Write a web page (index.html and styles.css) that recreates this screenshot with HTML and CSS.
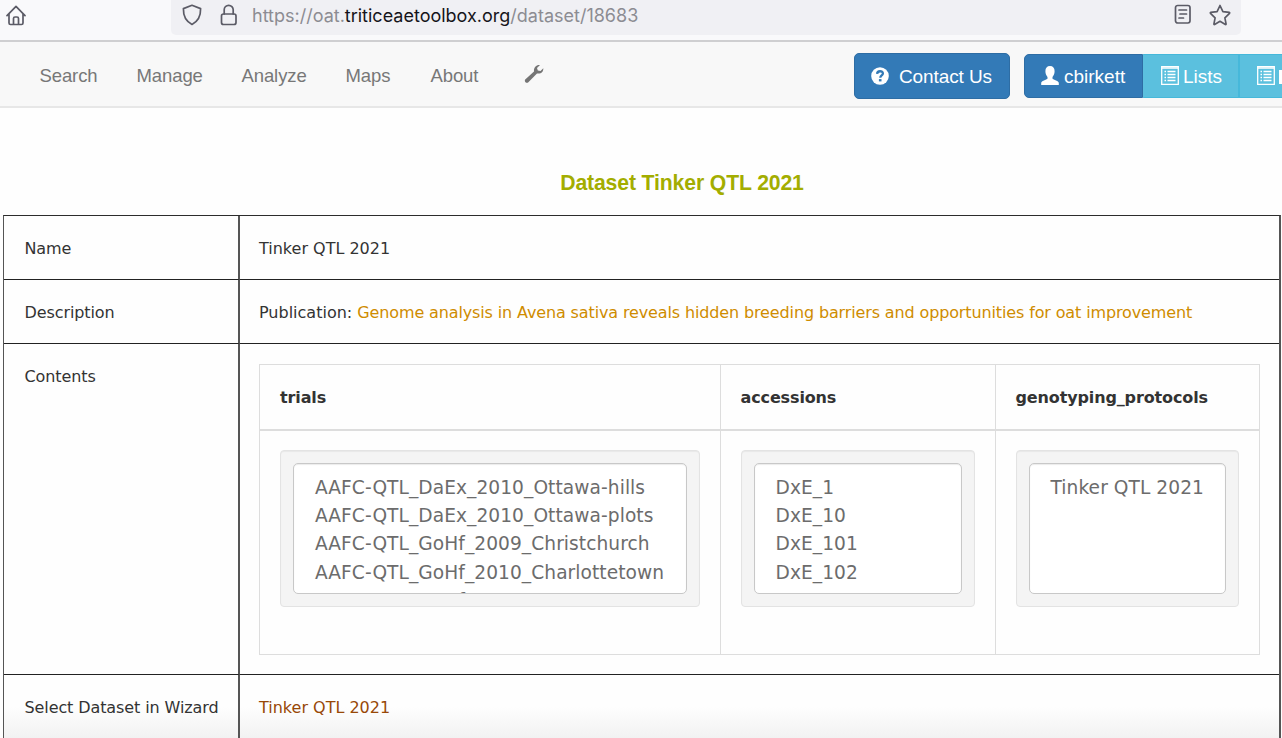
FILE: index.html
```html
<!DOCTYPE html>
<html lang="en">
<head>
<meta charset="utf-8">
<title>Dataset Tinker QTL 2021</title>
<link rel="stylesheet" href="styles.css">
</head>
<body>
<header class="browser">
  <svg class="home" width="20" height="21" viewBox="0 0 20 21"><path d="M1 10.6 10 1.4l9 9.2M3 9v9q0 1.5 1.5 1.5h11q1.500 0 1.500-1.500V9M7.500 19v-5.500q0-1.500 1.500-1.500h2q1.500 0 1.500 1.500V19"/></svg>
  <div class="address">
    <svg class="shield" width="20" height="22" viewBox="0 0 20 22"><path d="M10 1.300 18.600 4.600C18.800 12 16 17.500 10 20.500 4 17.500 1.200 12 1.400 4.600Z"/></svg>
    <svg class="lock" width="18" height="22" viewBox="0 0 18 22"><rect x="1.500" y="10" width="14.500" height="10.500" rx="2"/><path d="M4.200 10V5.800a4.500 4.500 0 0 1 9 0V10"/></svg>
    <span class="url">https://oat.<span class="domain">triticeaetoolbox.org</span>/dataset/18683</span>
    <svg class="reader" width="18" height="21" viewBox="0 0 18 21"><rect x="1.500" y="1.500" width="14.500" height="17.500" rx="2.200"/><path d="M5 6h7.500M6 10h6.500M5 14h4.500"/></svg>
    <svg class="star" width="22" height="22" viewBox="0 0 22 22"><path d="m11 1.500 2.900 6.100 6.500.8q.6.300.1.900l-4.600 4.500 1.200 6.300q-.1.600-.7.400L11 17.300l-5.400 3.200q-.6.200-.7-.4l1.200-6.300L1.500 9.300q-.5-.6.100-.9l6.500-.8Z"/></svg>
  </div>
</header>
<nav class="navbar">
  <div class="links">
    <a class="w-search">Search</a><a class="w-manage">Manage</a><a class="w-analyze">Analyze</a><a class="w-maps">Maps</a><a class="w-about">About</a>
    <svg class="wrench" width="20" height="20" viewBox="0 0 20 20"><path d="M1.200 15.500 10 7.500C9.600 3.900 12 .6 16 1.100l-3 3 .8 2.500 2.700.4 2.800-2.800c.3 4-2.900 6.100-6.300 5.200l-8.900 9c-1.800 1.200-4.200-1-2.900-2.900Z"/></svg>
  </div>
  <div class="contact">
    <svg width="18" height="18" viewBox="0 0 18 18"><circle cx="9" cy="9" r="8.800" fill="#fff"/><path d="M6.100 6.900C6.200 3.400 12 3.500 11.900 6.500 11.800 8.400 9.300 8.500 9.300 10.700" fill="none" stroke="#337ab7" stroke-width="2.300"/><rect x="7.900" y="12.100" width="2.600" height="2.300" fill="#337ab7"/></svg>
    <span>Contact Us</span>
  </div>
  <div class="group">
    <div class="btn user"><svg width="18" height="19" viewBox="0 0 18 19"><path fill="#fff" d="M9 0c3 0 4.700 2 4.600 5.300 0 2.300-.9 4.300-2.100 5.600v1.700c0 1 5.800 2.200 6.300 4.200V19H.2v-2.200c.5-2 6.300-3.200 6.300-4.200v-1.700C5.300 9.600 4.400 7.600 4.400 5.300 4.300 2 6 0 9 0Z"/></svg><span>cbirkett</span></div>
    <div class="btn info lists"><svg width="18" height="19" viewBox="0 0 18 19"><path fill="none" stroke="#fff" stroke-width="1.300" d="M.7.700h16.600v17.600H.700Z"/><path stroke="#fff" stroke-width="1.300" d="M.7 2h16.600M3.500 5.500h1.500M6.500 5.500h8M3.500 8.500h1.500M6.500 8.500h8M3.500 11.500h1.500M6.500 11.500h8M3.500 14.500h1.500M6.500 14.500h8"/></svg><span>Lists</span></div>
    <div class="btn info more"><svg width="18" height="19" viewBox="0 0 18 19"><path fill="none" stroke="#fff" stroke-width="1.300" d="M.7.700h16.600v17.600H.700Z"/><path stroke="#fff" stroke-width="1.300" d="M.7 2h16.600M3.500 5.500h1.500M6.500 5.500h8M3.500 8.500h1.500M6.500 8.500h8M3.500 11.500h1.500M6.500 11.500h8M3.500 14.500h1.500M6.500 14.500h8"/></svg><span class="sliver"></span></div>
  </div>
</nav>
<main>
  <h1><span>Dataset Tinker QTL 2021</span></h1>
  <div class="details">
    <div class="cell label">Name</div>
    <div class="cell">Tinker QTL 2021</div>
    <div class="cell label">Description</div>
    <div class="cell">Publication: <a class="paper">Genome analysis in Avena sativa reveals hidden breeding barriers and opportunities for oat improvement</a></div>
    <div class="cell label">Contents</div>
    <div class="cell">
      <div class="contents">
        <div class="head">trials</div><div class="head">accessions</div><div class="head">genotyping_protocols</div>
        <div class="body"><div class="well"><ul class="list"><li>AAFC-QTL_DaEx_2010_Ottawa-hills</li><li>AAFC-QTL_DaEx_2010_Ottawa-plots</li><li>AAFC-QTL_GoHf_2009_Christchurch</li><li>AAFC-QTL_GoHf_2010_Charlottetown</li><li>AAFC-QTL_GoHf</li></ul></div></div>
        <div class="body"><div class="well"><ul class="list"><li>DxE_1</li><li>DxE_10</li><li>DxE_101</li><li>DxE_102</li></ul></div></div>
        <div class="body"><div class="well"><ul class="list"><li>Tinker QTL 2021</li></ul></div></div>
      </div>
    </div>
    <div class="cell label">Select Dataset in Wizard</div>
    <div class="cell"><a class="wizard">Tinker QTL 2021</a></div>
  </div>
</main>
</body>
</html>
```

FILE: styles.css
```css
* { box-sizing: border-box; }
body { margin: 0; width: 1282px; height: 738px; overflow: hidden; background: #fefefe; color: #333; font-family: Verdana, "DejaVu Sans", sans-serif; font-size: 16px; }
svg { display: block; flex: none; }
.browser { height: 42px; display: flex; align-items: flex-start; background: #f9f9fb; border-bottom: 2px solid #cfcfd1; }
.browser svg { fill: none; stroke: #5b5b66; stroke-width: 1.7; stroke-linejoin: round; stroke-linecap: round; }
.home { margin: 5px 0 0 6px; }
.address { margin-left: 145px; width: 1070px; height: 35px; display: flex; background: #f0f0f4; border-radius: 0 0 5px 5px; }
.shield { margin: 4px 0 0 11px; }
.lock { margin: 4px 0 0 18px; }
.url { width: 388px; margin: 0 0 0 14px; font: 18px/31px Inter, sans-serif; white-space: nowrap; color: #8c8c92; }
.domain { color: #15141a; }
.reader { margin: 4px 0 0 534px; }
.star { margin: 4px 0 0 17px; }
.navbar { height: 66px; display: flex; background: #f8f8f8; border-bottom: 2px solid #e7e7e7; font-family: "Helvetica Neue", "Liberation Sans", sans-serif; font-size: 18.5px; overflow: hidden; }
.links { width: 854px; display: flex; padding: 20px 0 0 39.5px; line-height: 28px; color: #777; flex: none; letter-spacing: -0.1px; }
.w-search { width: 97px; }
.w-manage { width: 105px; }
.w-analyze { width: 104px; }
.w-maps { width: 85px; }
.w-about { width: 93px; }
.wrench { fill: #757575; margin-top: 2px; }
.contact { width: 156px; height: 46px; margin-top: 11px; padding: 2px 0 0 16px; display: flex; align-items: center; gap: 10px; flex: none; background: #337ab7; border: 1px solid #2e6da4; border-radius: 5px; color: #fff; font-size: 19px; letter-spacing: -0.1px; white-space: nowrap; }
.contact svg { margin-top: -3px; }
.group { margin: 12px 0 0 14px; height: 44px; display: flex; flex: none; color: #fff; font-size: 19px; }
.btn { display: flex; align-items: center; padding: 1px 0 0 16px; gap: 5px; border: 1px solid; }
.btn svg { margin-top: -3px; }
.user { width: 119px; background: #337ab7; border-color: #2e6da4; border-radius: 5px 0 0 5px; }
.info { background: #5bc0de; border-color: #46b8da; }
.lists { width: 96px; padding-left: 17px; gap: 4px; border-left-color: #5bc0de; }
.more { width: 60px; padding-left: 17px; gap: 4px; }
.sliver { width: 3px; height: 14px; background: #fff; }
main { height: 630px; overflow: hidden; }
h1 { margin: 61px 0 0; padding-left: 82px; height: 46px; text-align: center; font: bold 21.2px/28px "Helvetica Neue", "Liberation Sans", sans-serif; color: #a3ad00; letter-spacing: -0.13px; }
.details { margin-left: 3px; width: 1278px; display: grid; grid-template-columns: 236px 1039px; grid-template-rows: 64px 64px 331px 64px; border: 1px solid #2c2c2c; border-left-color: #555; border-right: 2px solid #555; }
.cell { padding: 19px 0 0 19px; line-height: 27px; border-bottom: 1px solid #222; white-space: nowrap; }
.label { padding-left: 20.5px; border-right: 2px solid #555; letter-spacing: -0.1px; }
.paper { color: #cf8c00; letter-spacing: -0.13px; }
.wizard { color: #984807; }
.cell:nth-last-child(-n+2) { background: linear-gradient(#fefefe 50%, #f2f2f2); }
.contents { margin-top: 1px; width: 1001px; height: 291px; display: grid; grid-template-columns: 460.5px 275px 263.5px; grid-template-rows: 66px 223px; border: 1px solid #ddd; }
.head { padding: 19px 0 0 20px; border-bottom: 2px solid #ddd; border-right: 1px solid #ddd; font-weight: bold; letter-spacing: -0.13px; }
.body { padding: 19px 20px 0; border-right: 1px solid #ddd; }
.contents > :nth-child(3n) { border-right: 0; }
.well { height: 157px; padding: 12px; background: #f4f4f4; border: 1px solid #e3e3e3; border-radius: 4px; box-shadow: inset 0 1px 1px rgba(0,0,0,.05); }
.list { height: 131px; margin: 0; padding: 10px 20px 0 21px; overflow: hidden; list-style: none; background: #fff; border: 1px solid #c8c8c8; border-radius: 5px; box-shadow: inset 0 1px 1px rgba(0,0,0,.08); color: #6c6c6c; font-size: 18.6px; line-height: 28.2px; letter-spacing: 0.07px; }
```
